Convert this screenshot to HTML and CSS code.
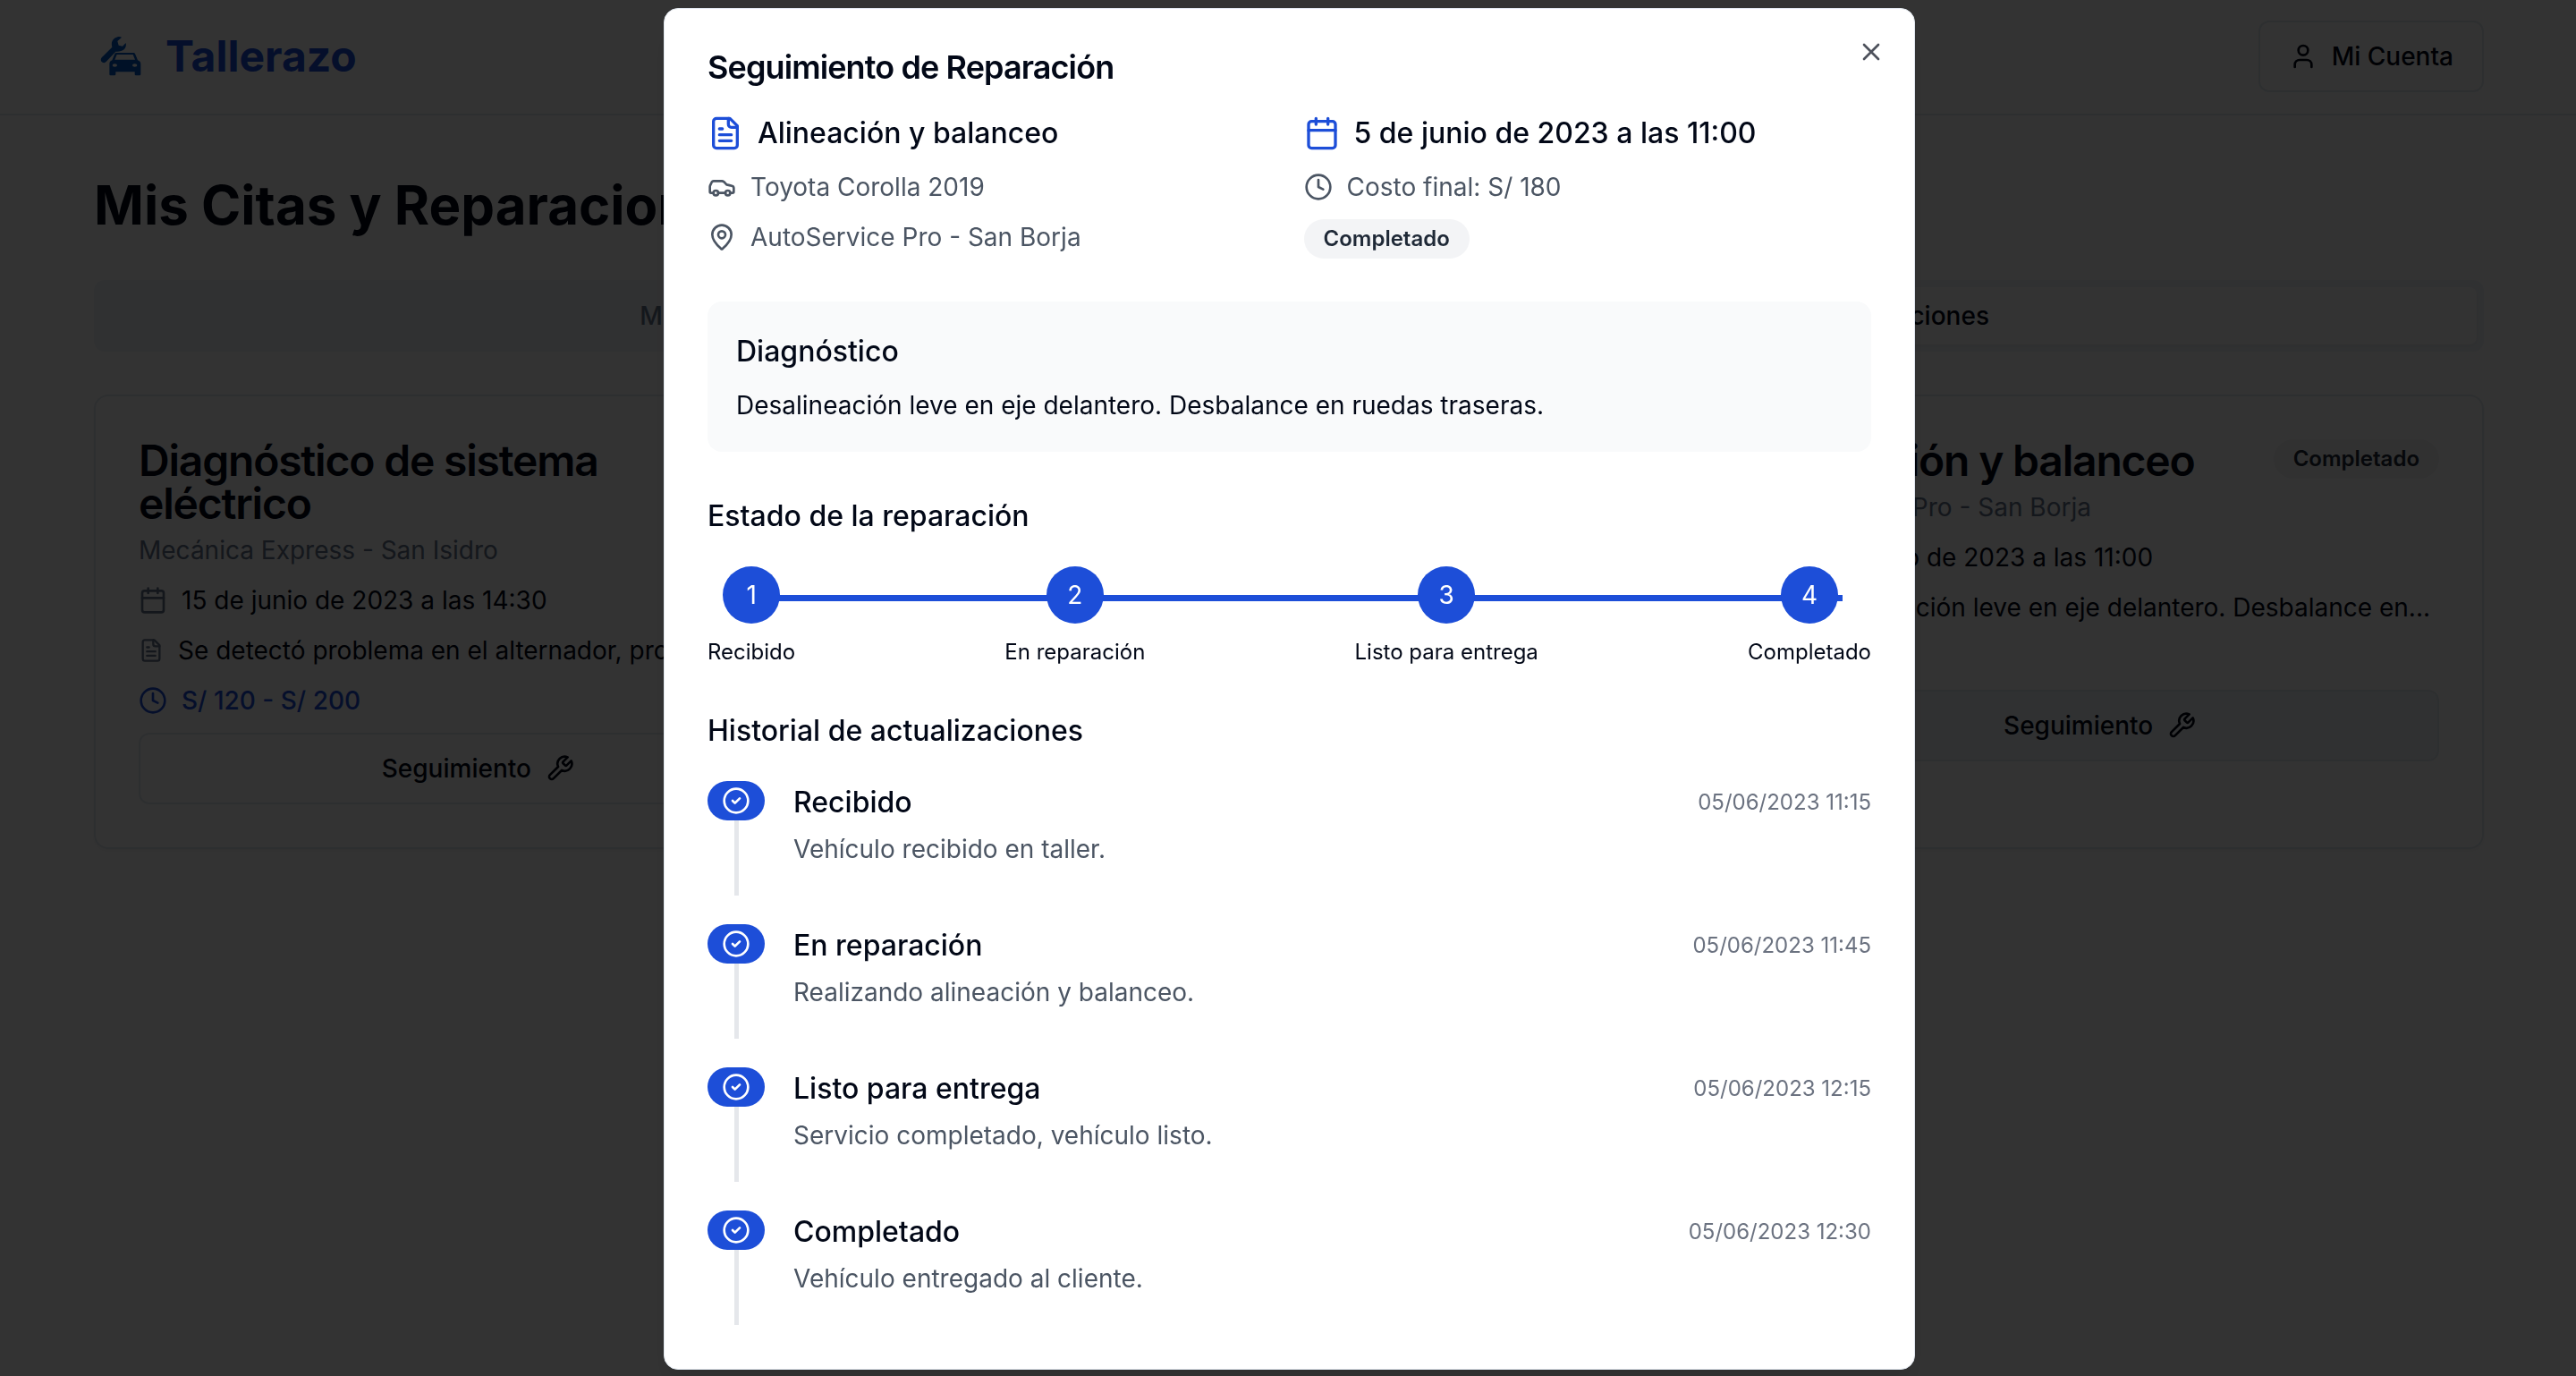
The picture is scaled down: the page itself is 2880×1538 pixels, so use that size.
FILE: index.html
```html
<!DOCTYPE html>
<html lang="es">
<head>
<meta charset="utf-8">
<meta name="viewport" content="width=device-width, initial-scale=1">
<title>Tallerazo - Mis Citas y Reparaciones</title>
<link rel="stylesheet" href="styles.css">
</head>
<body>
<svg class="sprite" aria-hidden="true">
  <symbol id="calendar" viewBox="0 0 24 24"><path d="M8 2v4M16 2v4M3 10h18"/><rect x="3" y="4" width="18" height="18" rx="2"/></symbol>
  <symbol id="file" viewBox="0 0 24 24"><path d="M15 2H6a2 2 0 0 0-2 2v16a2 2 0 0 0 2 2h12a2 2 0 0 0 2-2V7Z"/><path d="M14 2v4a2 2 0 0 0 2 2h4M10 9H8M16 13H8M16 17H8"/></symbol>
  <symbol id="clock" viewBox="0 0 24 24"><circle cx="12" cy="12" r="10"/><path d="M12 6v6l4 2"/></symbol>
  <symbol id="wrench" viewBox="0 0 24 24"><path d="M14.7 6.3a1 1 0 0 0 0 1.4l1.6 1.6a1 1 0 0 0 1.4 0l3.77-3.77a6 6 0 0 1-7.94 7.94l-6.91 6.91a2.12 2.12 0 0 1-3-3l6.91-6.91a6 6 0 0 1 7.94-7.94l-3.76 3.76z"/></symbol>
  <symbol id="user" viewBox="0 0 24 24"><path d="M19 21v-2a4 4 0 0 0-4-4H9a4 4 0 0 0-4 4v2"/><circle cx="12" cy="7" r="4"/></symbol>
  <symbol id="car" viewBox="0 0 24 24"><path d="M19 17h2c.6 0 1-.4 1-1v-3c0-.9-.7-1.700-1.500-1.900C18.700 10.600 16 10 16 10s-1.300-1.400-2.200-2.300c-.5-.4-1.100-.7-1.800-.7H5c-.6 0-1.100.4-1.400.9l-1.400 2.900A3.700 3.700 0 0 0 2 12v4c0 .6.4 1 1 1h2"/><circle cx="7" cy="17" r="2"/><path d="M9 17h6"/><circle cx="17" cy="17" r="2"/></symbol>
  <symbol id="pin" viewBox="0 0 24 24"><path d="M20 10c0 4.993-5.539 10.193-7.399 11.799a1 1 0 0 1-1.202 0C9.539 20.193 4 14.993 4 10a8 8 0 0 1 16 0"/><circle cx="12" cy="10" r="3"/></symbol>
  <symbol id="check" viewBox="0 0 24 24"><circle cx="12" cy="12" r="10"/><path d="m9 12 2 2 4-4"/></symbol>
  <symbol id="close" viewBox="0 0 24 24"><path d="M18 6 6 18M6 6l12 12"/></symbol>
</svg>

<header class="topbar">
  <a class="brand" href="#">
    <svg class="brand-mark" viewBox="15 3 192 192" aria-hidden="true">
      <path d="M108 35C98 30 80 36 75 52c-1 6 0 12 1 16L42 102c-6 6-4 14 2 17 5 3 10 1 14-4L88 83c10 1 22-1 28-7 6-6 8-14 6-22L111 65 98 62 94 48z"/>
      <path fill-rule="evenodd" d="M92 87h54c4 0 6 1 8 5l8 20c6 2 10 6 10 13v34a4 4 0 0 1-4 4h-12a4 4 0 0 1-4-4v-8H88v8a4 4 0 0 1-4 4H71a4 4 0 0 1-4-4v-34c0-7 3-11 9-13l8-20c2-4 4-5 8-5zM92 93l-7 17h68l-7-17zM77 129a8 5 0 0 0 16 0 8 5 0 0 0-16 0zM144 129a8 5 0 0 0 16 0 8 5 0 0 0-16 0z"/>
    </svg>
    <span>Tallerazo</span>
  </a>
  <button class="btn" type="button"><svg class="icon"><use href="#user"/></svg>Mi Cuenta</button>
</header>

<main class="page">
  <h1>Mis Citas y Reparaciones</h1>
  <div class="tabs" role="tablist">
    <button class="tab" type="button" role="tab">Mis Citas</button>
    <button class="tab tab-active" type="button" role="tab" aria-selected="true">Mis Reparaciones</button>
  </div>
  <div class="cards">
    <article class="card">
      <div class="card-head">
        <h2>Diagnóstico de sistema eléctrico</h2>
        <span class="badge">Recibido</span>
      </div>
      <p class="card-shop">Mecánica Express - San Isidro</p>
      <ul class="facts">
        <li><svg class="icon muted"><use href="#calendar"/></svg>15 de junio de 2023 a las 14:30</li>
        <li><svg class="icon icon-narrow muted"><use href="#file"/></svg><span class="clip">Se detectó problema en el alternador, probable...</span></li>
        <li class="price"><svg class="icon"><use href="#clock"/></svg>S/ 120 - S/ 200</li>
      </ul>
      <button class="btn" type="button">Seguimiento<svg class="icon"><use href="#wrench"/></svg></button>
    </article>
    <article class="card"></article>
    <article class="card">
      <div class="card-head">
        <h2>Alineación y balanceo</h2>
        <span class="badge">Completado</span>
      </div>
      <p class="card-shop">AutoService Pro - San Borja</p>
      <ul class="facts">
        <li><svg class="icon muted"><use href="#calendar"/></svg>5 de junio de 2023 a las 11:00</li>
        <li><svg class="icon icon-narrow muted"><use href="#file"/></svg><span class="clip">Desalineación leve en eje delantero. Desbalance en...</span></li>
        <li class="price"><svg class="icon"><use href="#clock"/></svg>S/ 180</li>
      </ul>
      <button class="btn btn-hover" type="button">Seguimiento<svg class="icon"><use href="#wrench"/></svg></button>
    </article>
  </div>
</main>

<div class="overlay">
  <section class="dialog" role="dialog" aria-modal="true" aria-labelledby="dialog-title">
    <button class="close" type="button" aria-label="Cerrar"><svg class="icon"><use href="#close"/></svg></button>
    <h2 class="dialog-title" id="dialog-title">Seguimiento de Reparación</h2>

    <div class="summary">
      <div class="summary-col">
        <p class="lead"><svg class="icon icon-lg"><use href="#file"/></svg>Alineación y balanceo</p>
        <p class="detail"><svg class="icon"><use href="#car"/></svg>Toyota Corolla 2019</p>
        <p class="detail"><svg class="icon"><use href="#pin"/></svg>AutoService Pro - San Borja</p>
      </div>
      <div class="summary-col">
        <p class="lead"><svg class="icon icon-lg"><use href="#calendar"/></svg>5 de junio de 2023 a las 11:00</p>
        <p class="detail"><svg class="icon"><use href="#clock"/></svg>Costo final: S/ 180</p>
        <span class="badge">Completado</span>
      </div>
    </div>

    <section class="diagnosis">
      <h3>Diagnóstico</h3>
      <p>Desalineación leve en eje delantero. Desbalance en ruedas traseras.</p>
    </section>

    <section class="block">
      <h3>Estado de la reparación</h3>
      <ol class="steps">
        <li><span class="step-dot">1</span>Recibido</li>
        <li><span class="step-dot">2</span>En reparación</li>
        <li><span class="step-dot">3</span>Listo para entrega</li>
        <li><span class="step-dot">4</span>Completado</li>
      </ol>
    </section>

    <section class="block">
      <h3>Historial de actualizaciones</h3>
      <ol class="history">
        <li>
          <div class="rail"><span class="pill"><svg class="icon"><use href="#check"/></svg></span></div>
          <div class="entry"><div class="entry-head"><h4>Recibido</h4><time>05/06/2023 11:15</time></div><p>Vehículo recibido en taller.</p></div>
        </li>
        <li>
          <div class="rail"><span class="pill"><svg class="icon"><use href="#check"/></svg></span></div>
          <div class="entry"><div class="entry-head"><h4>En reparación</h4><time>05/06/2023 11:45</time></div><p>Realizando alineación y balanceo.</p></div>
        </li>
        <li>
          <div class="rail"><span class="pill"><svg class="icon"><use href="#check"/></svg></span></div>
          <div class="entry"><div class="entry-head"><h4>Listo para entrega</h4><time>05/06/2023 12:15</time></div><p>Servicio completado, vehículo listo.</p></div>
        </li>
        <li>
          <div class="rail"><span class="pill"><svg class="icon"><use href="#check"/></svg></span></div>
          <div class="entry"><div class="entry-head"><h4>Completado</h4><time>05/06/2023 12:30</time></div><p>Vehículo entregado al cliente.</p></div>
        </li>
      </ol>
    </section>
  </section>
</div>
</body>
</html>
```
FILE: styles.css
```css
:root {
  --ink: #020817;
  --muted: #64748b;
  --gray: #4b5563;
  --line: #e2e8f0;
  --soft: #f1f5f9;
  --blue: #1d4ed8;
}

* { box-sizing: border-box; }

body {
  margin: 0;
  background: #fff;
  color: var(--ink);
  font: 400 28px/40px Inter, "Liberation Sans", sans-serif;
}

h1, h2, h3, h4, p, ul, ol { margin: 0; padding: 0; }
ul, ol { list-style: none; }
button { font: inherit; color: inherit; cursor: pointer; }

.sprite { display: none; }

.icon {
  flex: none;
  width: 32px;
  height: 32px;
  fill: none;
  stroke: currentColor;
  stroke-width: 2;
  stroke-linecap: round;
  stroke-linejoin: round;
}
.icon-narrow { width: 28px; }
.icon-lg { width: 40px; height: 40px; color: var(--blue); }
.muted { color: var(--muted); }

/* Header */
.topbar {
  display: flex;
  align-items: center;
  justify-content: space-between;
  padding: 23px 103px 24px 105px;
  border-bottom: 2px solid var(--line);
}
.brand {
  display: flex;
  align-items: center;
  gap: 16px;
  color: var(--blue);
  font-size: 48px;
  line-height: 64px;
  font-weight: 700;
  text-decoration: none;
}
.brand-mark { width: 64px; height: 64px; fill: #0058c0; }

.btn {
  display: flex;
  align-items: center;
  justify-content: center;
  gap: 16px;
  height: 80px;
  padding: 0 32px;
  border: 2px solid var(--line);
  border-radius: 12px;
  background: #fff;
  font-weight: 500;
}
.btn-hover { background: var(--soft); }

/* Page */
.page { padding: 64px 103px 64px 105px; }
h1 { font-size: 60px; line-height: 72px; font-weight: 700; }

.tabs {
  display: grid;
  grid-template-columns: 1fr 1fr;
  margin: 48px 0;
  padding: 8px;
  border-radius: 12px;
  background: var(--soft);
}
.tab {
  height: 64px;
  border: 0;
  border-radius: 8px;
  background: none;
  color: var(--muted);
  font-weight: 500;
}
.tab-active {
  background: #fff;
  color: var(--ink);
  box-shadow: 0 2px 4px rgb(0 0 0 / 5%);
}

.cards {
  display: grid;
  grid-template-columns: repeat(3, minmax(0, 1fr));
  gap: 48px;
}
.card {
  padding: 48px;
  border: 2px solid var(--line);
  border-radius: 16px;
  box-shadow: 0 2px 4px rgb(0 0 0 / 5%);
}
.card .btn { width: 100%; margin-top: 16px; }
.card-head {
  display: flex;
  align-items: flex-start;
  justify-content: space-between;
}
.card-head h2 {
  font-size: 48px;
  line-height: 48px;
  font-weight: 600;
  letter-spacing: -0.025em;
}
.card-shop { margin-top: 8px; color: var(--muted); }
.facts { display: grid; gap: 16px; margin-top: 16px; }
.facts li { display: flex; align-items: center; gap: 16px; min-width: 0; }
.clip { overflow: hidden; white-space: nowrap; text-overflow: ellipsis; }
.facts .price { color: var(--blue); font-weight: 500; }

.badge {
  align-self: flex-start;
  padding: 6px 22px;
  border-radius: 22px;
  background: #f3f4f6;
  color: #1f2937;
  font-size: 24px;
  line-height: 32px;
  font-weight: 600;
}

/* Dialog */
.overlay {
  position: fixed;
  inset: 0;
  display: flex;
  align-items: center;
  justify-content: center;
  padding: 2px 0 0 3px;
  background: rgb(0 0 0 / 80%);
}
.dialog {
  position: relative;
  display: grid;
  gap: 48px;
  width: 1399px;
  max-width: 100%;
  padding: 47px 48px 49px;
  border: 1px solid var(--line);
  border-radius: 16px;
  background: #fff;
  box-shadow: 0 20px 30px -6px rgb(0 0 0 / 10%);
}
.close {
  position: absolute;
  top: 32px;
  right: 32px;
  display: flex;
  padding: 0;
  border: 0;
  background: none;
  opacity: 0.7;
}
.dialog-title {
  margin-bottom: -16px;
  font-size: 36px;
  line-height: 36px;
  font-weight: 600;
  letter-spacing: -0.025em;
}
h3, h4, .lead { font-size: 32px; line-height: 48px; font-weight: 500; }

.summary { display: grid; grid-template-columns: 1fr 1fr; gap: 32px; }
.summary-col { display: flex; flex-direction: column; gap: 16px; }
.lead, .detail { display: flex; align-items: center; gap: 16px; }
.detail { color: var(--gray); }

.diagnosis {
  display: grid;
  gap: 16px;
  padding: 32px;
  border-radius: 16px;
  background: #f9fafb;
}
.block { display: grid; gap: 32px; }

.steps {
  position: relative;
  display: flex;
  justify-content: space-between;
  font-size: 24px;
  line-height: 32px;
}
/* Progress line running behind the numbered dots */
.steps::before {
  content: "";
  position: absolute;
  top: 32px;
  left: 32px;
  right: 32px;
  height: 7px;
  background: var(--blue);
}
.steps li {
  position: relative;
  display: flex;
  flex-direction: column;
  align-items: center;
  gap: 16px;
}
.step-dot {
  width: 64px;
  height: 64px;
  border-radius: 50%;
  background: var(--blue);
  color: #fff;
  font-size: 28px;
  line-height: 64px;
  text-align: center;
}

.history { display: grid; gap: 32px; }
.history li { display: flex; gap: 32px; }
.rail { display: flex; flex-direction: column; align-items: center; }
.rail::after { content: ""; flex: 1; width: 5px; background: #e5e7eb; }
.pill {
  display: flex;
  padding: 6px 16px;
  border-radius: 22px;
  background: var(--blue);
  color: #fff;
}
.entry { flex: 1; padding-bottom: 32px; }
.entry-head {
  display: flex;
  align-items: center;
  justify-content: space-between;
  margin-bottom: 8px;
}
.entry p { color: var(--gray); }
time { color: #6b7280; font-size: 24px; line-height: 32px; }
```
